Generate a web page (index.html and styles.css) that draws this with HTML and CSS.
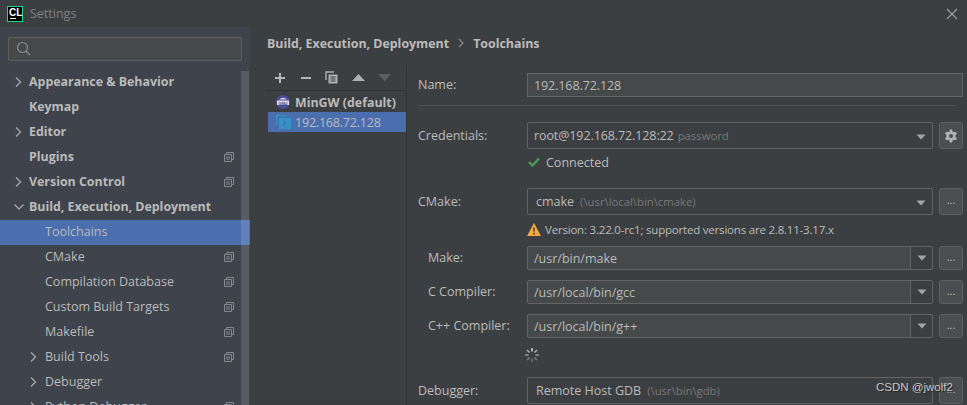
FILE: index.html
```html
<!DOCTYPE html>
<html lang="en">
<head>
    <meta charset="UTF-8">
    <title>Settings</title>
    <link rel="stylesheet" href="styles.css">
</head>
<body>
    <svg class="defs" width="0" height="0">
        <symbol id="copy" viewBox="0 0 10 10">
            <path d="M2.500 2V0.500H9.500V7.500H8M0.500 2.500H7.500V9.500H0.500Z M2 5H6M2 7H6" fill="none" stroke="#85898c" stroke-width="1"/>
        </symbol>
        <symbol id="arrow-right" viewBox="0 0 8 12">
            <path d="M2 1.500L6.500 6L2 10.500" fill="none" stroke="#a4a7a9" stroke-width="1.300"/>
        </symbol>
        <symbol id="caret" viewBox="0 0 10 6">
            <path d="M0.500 0.500H9.500L5 5.500Z" fill="#a3a6a8"/>
        </symbol>
    </svg>

    <header class="titlebar">
        <span class="logo"><span class="logo-text">CL</span><span class="logo-bar"></span></span>
        <span class="title">Settings</span>
        <svg class="close" width="12" height="12" viewBox="0 0 12 12"><path d="M1 1L11 11M11 1L1 11" stroke="#9a9d9f" stroke-width="1.200"/></svg>
    </header>

    <div class="content">
        <aside class="sidebar">
            <div class="search">
                <svg width="15" height="15" viewBox="0 0 15 15"><circle cx="6.500" cy="6.500" r="5" fill="none" stroke="#868a8c" stroke-width="1.200"/><path d="M10 10L14 14" stroke="#868a8c" stroke-width="1.400"/></svg>
            </div>
            <ul class="tree">
                <li class="node top"><svg class="arrow" width="8" height="12"><use href="#arrow-right"/></svg>Appearance &amp; Behavior</li>
                <li class="node top">Keymap</li>
                <li class="node top"><svg class="arrow" width="8" height="12"><use href="#arrow-right"/></svg>Editor</li>
                <li class="node top">Plugins<svg class="copy" width="10" height="10"><use href="#copy"/></svg></li>
                <li class="node top"><svg class="arrow" width="8" height="12"><use href="#arrow-right"/></svg>Version Control<svg class="copy" width="10" height="10"><use href="#copy"/></svg></li>
                <li class="node top"><svg class="arrow down" width="12" height="8" viewBox="0 0 12 8"><path d="M1.500 1.500L6 6L10.500 1.500" fill="none" stroke="#a4a7a9" stroke-width="1.300"/></svg>Build, Execution, Deployment</li>
                <li class="node sub selected">Toolchains</li>
                <li class="node sub">CMake<svg class="copy" width="10" height="10"><use href="#copy"/></svg></li>
                <li class="node sub">Compilation Database<svg class="copy" width="10" height="10"><use href="#copy"/></svg></li>
                <li class="node sub">Custom Build Targets<svg class="copy" width="10" height="10"><use href="#copy"/></svg></li>
                <li class="node sub">Makefile<svg class="copy" width="10" height="10"><use href="#copy"/></svg></li>
                <li class="node sub"><svg class="arrow" width="8" height="12"><use href="#arrow-right"/></svg>Build Tools<svg class="copy" width="10" height="10"><use href="#copy"/></svg></li>
                <li class="node sub"><svg class="arrow" width="8" height="12"><use href="#arrow-right"/></svg>Debugger</li>
                <li class="node sub"><svg class="arrow" width="8" height="12"><use href="#arrow-right"/></svg>Python Debugger<svg class="copy" width="10" height="10"><use href="#copy"/></svg></li>
            </ul>
            <div class="scrollbar"></div>
        </aside>

        <main class="main">
            <div class="breadcrumb">
                <span>Build, Execution, Deployment</span>
                <svg width="6" height="10" viewBox="0 0 6 10"><path d="M1 1L5 5L1 9" fill="none" stroke="#8b8f92" stroke-width="1.100"/></svg>
                <span>Toolchains</span>
            </div>

            <div class="columns">
                <section class="toolchains">
                    <div class="toolbar">
                        <svg width="12" height="12" viewBox="0 0 12 12"><path d="M6 1V11M1 6H11" stroke="#b4b7b9" stroke-width="2"/></svg>
                        <svg width="12" height="12" viewBox="0 0 12 12"><path d="M1 6H11" stroke="#b4b7b9" stroke-width="2"/></svg>
                        <svg width="13" height="13" viewBox="0 0 13 13"><path d="M1 9V1H9" fill="none" stroke="#aeb1b3" stroke-width="1.400"/><path d="M3.500 3.500H12.500V12.500H3.500Z" fill="#aeb1b3"/><path d="M5.500 6H10.500M5.500 8H10.500M5.500 10H10.500" stroke="#3c3f41" stroke-width="1"/></svg>
                        <svg width="13" height="7" viewBox="0 0 13 7"><path d="M6.500 0L13 7H0Z" fill="#aeb1b3"/></svg>
                        <svg width="13" height="7" viewBox="0 0 13 7"><path d="M0 0H13L6.500 7Z" fill="#5b5f62"/></svg>
                    </div>
                    <ul class="chain-list">
                        <li class="chain default">
                            <svg width="14" height="14" viewBox="0 0 14 14"><circle cx="7" cy="7" r="7" fill="#4f4a94"/><path d="M3 4.500Q7 1 11 4.500Z" fill="#d8d8e8"/><rect x="1" y="5.500" width="12" height="4.500" fill="#d8d8e8"/><text x="7" y="9.500" text-anchor="middle" class="gnu">GNU</text></svg>
                            MinGW (default)
                        </li>
                        <li class="chain selected">
                            <svg width="15" height="14" viewBox="0 0 15 14"><path d="M0.700 10V0.700H11" fill="none" stroke="#3592c4" stroke-width="1.300"/><rect x="3" y="3" width="12" height="11" fill="#3592c4"/><path d="M7 6L9.500 8.500L7 11" fill="none" stroke="#4b6eaf" stroke-width="1.300"/></svg>
                            192.168.72.128
                        </li>
                    </ul>
                </section>

                <form class="form">
                    <div class="row name-row">
                        <label class="label">Name:</label>
                        <div class="field wide number">192.168.72.128</div>
                    </div>
                    <hr class="separator">

                    <div class="row tall">
                        <label class="label">Credentials:</label>
                        <div class="field dark"><span class="number">root@192.168.72.128:22</span><span class="hint">password</span><svg class="caret" width="10" height="6"><use href="#caret"/></svg></div>
                        <button type="button" class="side-button tall-button">
                            <svg width="14" height="14" viewBox="0 0 24 24"><path fill="#afb1b3" fill-rule="evenodd" d="M10 1H14L14.700 4.400L17 5.700L20.300 4.600L22.300 8L19.700 10.300V13.700L22.300 16L20.300 19.400L17 18.300L14.700 19.600L14 23H10L9.300 19.600L7 18.300L3.700 19.400L1.700 16L4.300 13.700V10.300L1.700 8L3.700 4.600L7 5.700L9.300 4.400ZM12 8.500A3.500 3.500 0 1 0 12 15.500A3.500 3.500 0 1 0 12 8.500Z"/></svg>
                        </button>
                    </div>
                    <div class="note connected">
                        <svg width="12" height="10" viewBox="0 0 12 10"><path d="M1 5L4.500 8.500L11 1.500" fill="none" stroke="#499c54" stroke-width="2.400"/></svg>
                        Connected
                    </div>

                    <div class="row tall cmake-row">
                        <label class="label">CMake:</label>
                        <div class="field dark cmake">cmake<span class="hint">(\usr\local\bin\cmake)</span><svg class="caret" width="10" height="6"><use href="#caret"/></svg></div>
                        <button type="button" class="side-button tall-button">...</button>
                    </div>
                    <div class="note warning">
                        <svg width="14" height="13" viewBox="0 0 14 13"><path d="M7 0L14 13H0Z" fill="#f2a93b"/><path d="M7 4.500V8.500M7 9.800V11.500" stroke="#3c3f41" stroke-width="1.500"/></svg>
                        Version: 3.22.0-rc1; supported versions are 2.8.11-3.17.x
                    </div>

                    <div class="row tool">
                        <label class="label">Make:</label>
                        <div class="field combo">/usr/bin/make<span class="combo-arrow"><svg width="10" height="6"><use href="#caret"/></svg></span></div>
                        <button type="button" class="side-button">...</button>
                    </div>
                    <div class="row tool">
                        <label class="label">C Compiler:</label>
                        <div class="field combo">/usr/local/bin/gcc<span class="combo-arrow"><svg width="10" height="6"><use href="#caret"/></svg></span></div>
                        <button type="button" class="side-button">...</button>
                    </div>
                    <div class="row tool">
                        <label class="label">C++ Compiler:</label>
                        <div class="field combo">/usr/local/bin/g++<span class="combo-arrow"><svg width="10" height="6"><use href="#caret"/></svg></span></div>
                        <button type="button" class="side-button">...</button>
                    </div>
                    <svg class="spinner" width="14" height="14" viewBox="0 0 14 14">
                        <g stroke-width="1.600">
                            <path d="M7 0V3.500" stroke="#c9cbcc"/>
                            <path d="M12 2L9.500 4.500" stroke="#a8aaac"/>
                            <path d="M14 7H10.500" stroke="#8f9294"/>
                            <path d="M12 12L9.500 9.500" stroke="#7a7d7f"/>
                            <path d="M7 14V10.500" stroke="#6c6f71"/>
                            <path d="M2 12L4.500 9.500" stroke="#7a7d7f"/>
                            <path d="M0 7H3.500" stroke="#8f9294"/>
                            <path d="M2 2L4.500 4.500" stroke="#a8aaac"/>
                        </g>
                    </svg>
                    <div class="row tall debugger-row">
                        <label class="label">Debugger:</label>
                        <div class="field dark cmake">Remote Host GDB<span class="hint">(\usr\bin\gdb)</span></div>
                        <button type="button" class="side-button tall-button">...</button>
                    </div>
                </form>
            </div>
        </main>
    </div>

    <div class="watermark">CSDN @jwolf2</div>
</body>
</html>
```
FILE: styles.css
```css
* {
    box-sizing: border-box;
}

html, body {
    height: 100%;
}

body {
    margin: 0;
    height: 405px;
    overflow: hidden;
    position: relative;
    background-color: #3c3f41;
    color: #bbbbbb;
    font-family: "Open Sans", "Noto Sans", sans-serif;
    font-size: 12.5px;
}

ul {
    list-style: none;
    margin: 0;
    padding: 0;
}

.defs {
    position: absolute;
}

.titlebar {
    height: 27px;
    display: flex;
    align-items: center;
    padding-left: 7px;
    background-color: #3c3f41;
}

.logo {
    width: 16px;
    height: 16px;
    margin-right: 7px;
    background-color: #000;
    border: 1px solid #21d789;
    color: #fff;
    font-family: "Liberation Sans", sans-serif;
    font-size: 10px;
    font-weight: 700;
    line-height: 9px;
    padding: 1px 0 0 1px;
    display: flex;
    flex-direction: column;
}

.logo-bar {
    width: 6px;
    height: 1px;
    margin-top: 1px;
    margin-left: 1px;
    background-color: #fff;
}

.title {
    color: #7f8385;
}

.close {
    margin-left: auto;
    margin-right: 9px;
}

.content {
    display: flex;
    height: 378px;
}

.sidebar {
    width: 250px;
    flex-shrink: 0;
    position: relative;
    background-color: #3e434c;
    padding: 10px 8px 0;
}

.search {
    height: 24px;
    background-color: #45494a;
    border: 1px solid #5e6060;
    border-radius: 2px;
    padding: 3px 0 0 7px;
    margin-bottom: 9px;
}

/* sits on top of the tree, the selected row shows through */
.scrollbar {
    position: absolute;
    top: 44px;
    bottom: 0;
    left: 241px;
    width: 8px;
    background-color: rgba(255, 255, 255, 0.13);
}

.tree {
    margin: 0 -8px;
}

.node {
    height: 25px;
    padding-bottom: 2px;
    display: flex;
    align-items: center;
    position: relative;
    white-space: nowrap;
}

.node.top {
    padding-left: 29px;
    font-size: 12.4px;
    font-weight: 700;
}

.node.sub {
    padding-left: 45px;
}

.node.selected {
    background-color: #4b6eaf;
}

.arrow {
    position: absolute;
    left: 14px;
}

.arrow.down {
    left: 13px;
}

.node.sub .arrow {
    left: 29px;
}

.copy {
    position: absolute;
    left: 224px;
}

.main {
    flex: 1;
    padding-top: 7px;
}

.breadcrumb {
    height: 18px;
    display: flex;
    align-items: center;
    gap: 9px;
    padding-left: 267px;
    margin-left: -250px;
    font-size: 12.4px;
    font-weight: 700;
}

.columns {
    display: flex;
    margin-top: 13px;
}

.toolchains {
    width: 140px;
    margin-left: 17px;
    height: 340px;
    border-right: 1px solid #323232;
    flex-shrink: 0;
}

.toolbar {
    height: 26px;
    display: flex;
    align-items: center;
    gap: 13.5px;
    padding-left: 7px;
    border-bottom: 1px solid #323232;
}

.chain-list {
    margin-top: 1px;
    margin-left: 1px;
}

.chain {
    height: 20px;
    display: flex;
    align-items: center;
    gap: 5px;
    padding-left: 8px;
    white-space: nowrap;
}

.chain.default {
    font-size: 12.4px;
    font-weight: 700;
}

.chain.selected {
    background-color: #4b6eaf;
    gap: 4px;
    letter-spacing: -0.2px;
}

.gnu {
    font-family: "Liberation Sans", sans-serif;
    font-size: 4px;
    font-weight: 700;
    fill: #3f3b80;
}

.form {
    flex: 1;
    padding: 0 4px 0 11px;
}

.row {
    display: flex;
    align-items: center;
}

.label {
    width: 109px;
    flex-shrink: 0;
    padding-bottom: 2px;
}

.tall .label {
    padding-bottom: 0;
}

.field {
    flex: 1;
    height: 24px;
    display: flex;
    align-items: center;
    padding-left: 6px;
    background-color: #45494a;
    border: 1px solid #646464;
    border-radius: 2px;
    white-space: nowrap;
    position: relative;
}

.field.wide {
    border-radius: 0;
}

.number {
    letter-spacing: -0.1px;
}

.name-row {
    margin-top: 8px;
}

.separator {
    margin: 8px 7px 16px 0;
    border: none;
    border-top: 1px solid #515151;
}

.field.dark {
    background-color: #3c3f41;
    height: 27px;
}

.field.cmake {
    padding-left: 8px;
}

.hint {
    color: #787878;
    font-size: 11.3px;
    margin-left: 4px;
}

.cmake .hint {
    margin-left: 6px;
}

.caret {
    position: absolute;
    right: 6px;
    top: 11px;
}

.side-button {
    width: 24px;
    height: 24px;
    margin-left: 6px;
    padding: 0 0 4px;
    background-color: #4a4e50;
    border: 1px solid #5e6060;
    border-radius: 3px;
    color: #bbbbbb;
    font-family: inherit;
    font-size: 11px;
    display: flex;
    align-items: center;
    justify-content: center;
}

.tall-button {
    height: 27px;
}

.tall-button svg {
    margin-top: 4px;
}

.note {
    display: flex;
    align-items: center;
    height: 18px;
    padding-left: 109px;
}

.connected {
    margin-top: 4px;
    margin-bottom: 17px;
    gap: 6px;
    padding-left: 110px;
}

.warning {
    margin-top: 5px;
    margin-bottom: 8px;
    gap: 4px;
    font-size: 11.5px;
    letter-spacing: -0.2px;
}

.tool {
    margin-bottom: 10px;
}

.tool .label {
    padding-left: 10px;
}

.combo {
    padding-right: 22px;
}

.combo-arrow {
    position: absolute;
    right: 0;
    top: 0;
    bottom: 0;
    width: 22px;
    display: flex;
    align-items: center;
    justify-content: center;
    background-color: #3c3f41;
    border-left: 1px solid #646464;
}

.spinner {
    display: block;
    margin: 7px 0 0 107px;
}

.debugger-row {
    margin-top: 15px;
}

.watermark {
    position: absolute;
    left: 876px;
    top: 381px;
    color: #c8c8c8;
    font-family: "Liberation Sans", sans-serif;
    font-size: 11.5px;
    text-shadow: 1px 1px 1px #222;
}
```
